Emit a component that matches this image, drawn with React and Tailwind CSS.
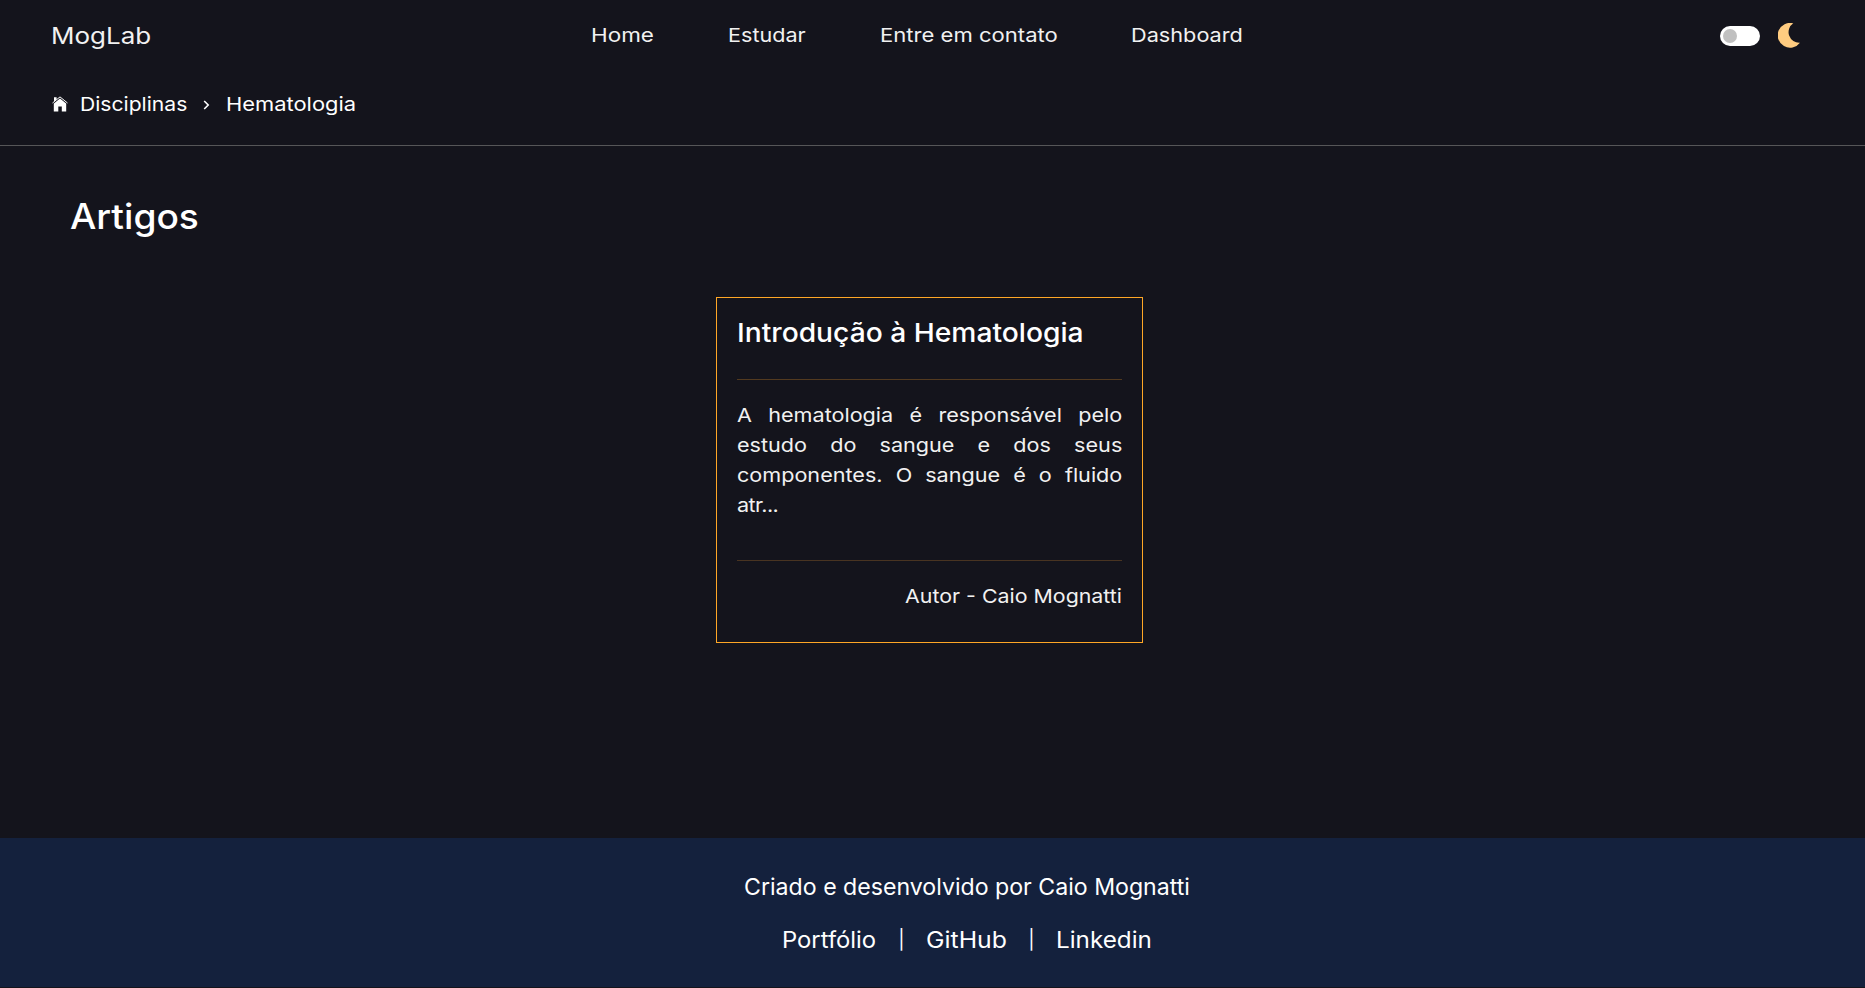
const navItems = [
  { label: "Home", className: "w-[64px] scale-x-[1.165]" },
  { label: "Estudar", className: "w-[80px] scale-x-[1.12]" },
  { label: "Entre em contato", className: "w-[178.5px] scale-x-[1.145]" },
  { label: "Dashboard", className: "w-[112px] scale-x-[1.125]" },
];

function HomeIcon() {
  return (
    <svg width="16" height="16" viewBox="0 0 16 16" className="block shrink-0" fill="#fff">
      <path d="M2 1.2H4.6V3.2L2 5.4Z" />
      <path d="M.5 7 8 .9 15.5 7" fill="none" stroke="#fff" strokeWidth="1" />
      <path d="M8 2.4 14.2 7.6V15.6H9.8V10.4H6.3V15.6H1.8V7.6Z" />
    </svg>
  );
}

function Header() {
  return (
    <header className="flex h-[70px] items-center pl-[50.5px] text-[#f1f1f1]">
      <a className="w-[540.5px] origin-left scale-x-[1.13] pt-px text-[23px] leading-8">MogLab</a>
      <nav className="flex gap-[72.5px] text-[19.3px] leading-8">
        {navItems.map((item) => (
          <a key={item.label} className={"block origin-left whitespace-nowrap " + item.className}>
            {item.label}
          </a>
        ))}
      </nav>
      <div className="mr-[65px] ml-auto flex items-center gap-[18px] pt-0.5">
        <span className="flex h-5 w-10 items-center rounded-full bg-white pl-[3px]">
          <span className="size-3.5 rounded-full bg-[#c0c0c0]" />
        </span>
        <svg width="22" height="25" viewBox="0 0 22 25" className="-mt-px block" fill="#ffcc80">
          <path d="M15.3.3A12.4 12.4 0 1 0 22 19.7A10.6 10.6 0 0 1 15.3.3Z" />
        </svg>
      </div>
    </header>
  );
}

function Breadcrumb() {
  return (
    <div className="flex h-[76px] items-center border-b border-[#565658] pb-[7px] pl-[52px] text-[19.3px] leading-8 text-white">
      <HomeIcon />
      <a className="ml-3 w-[110px] origin-left scale-x-[1.095]">Disciplinas</a>
      <svg width="7" height="10" viewBox="0 0 7 10" className="mt-0.5 ml-[13px] block" fill="none" stroke="#fff" strokeWidth="1.6">
        <path d="M1.2 1 5.2 5 1.2 9" />
      </svg>
      <span className="ml-4 origin-left scale-x-[1.136]">Hematologia</span>
    </div>
  );
}

function ArticleCard() {
  return (
    <article className="mt-[61px] ml-[716px] h-[346px] w-[427px] border border-[#ffa726] px-5 pt-[17px] text-[#f1f1f1]">
      <h2 className="origin-left scale-x-[1.085] text-[26px] leading-9 font-medium whitespace-nowrap text-white">Introdução à Hematologia</h2>
      <hr className="mt-7 border-[#533a1f]" />
      <p className="mt-5 w-[344px] origin-left scale-x-[1.12] text-justify text-[19.3px] leading-[30px]">
        A hematologia é responsável pelo estudo do sangue e dos seus componentes. O sangue é o fluido{" "}
        <span className="tracking-[-0.5px]">atr...</span>
      </p>
      <hr className="mt-10 border-[#493421]" />
      <p className="mt-5 origin-right scale-x-[1.108] text-right text-[19.3px] leading-[30px]">Autor - Caio Mognatti</p>
    </article>
  );
}

function Footer() {
  return (
    <footer className="h-[149px] bg-[#14213d] pt-[33.5px] pl-[69px] text-[22.5px] leading-[30px] text-white">
      <p className="scale-x-[1.028] text-center">Criado e desenvolvido por Caio Mognatti</p>
      <div className="mt-[23px] flex justify-center">
        <a className="w-[95px] origin-left scale-x-[1.058]">Portfólio</a>
        <span className="w-[49px] text-center text-[19px]">|</span>
        <a className="w-[81px] origin-left scale-x-[1.103]">GitHub</a>
        <span className="w-[49px] text-center text-[19px]">|</span>
        <a className="w-[96px] origin-left scale-x-[1.078]">Linkedin</a>
      </div>
    </footer>
  );
}

export default function App() {
  return (
    <div className="flex h-[988px] w-full flex-col overflow-hidden bg-[#14141c] pb-px font-['Inter',sans-serif]">
      <Header />
      <Breadcrumb />
      <main className="flex-1 pt-[50px]">
        <h1 className="ml-[69.5px] origin-left scale-x-[1.062] text-[35px] leading-10 font-medium text-white">Artigos</h1>
        <ArticleCard />
      </main>
      <Footer />
    </div>
  );
}
